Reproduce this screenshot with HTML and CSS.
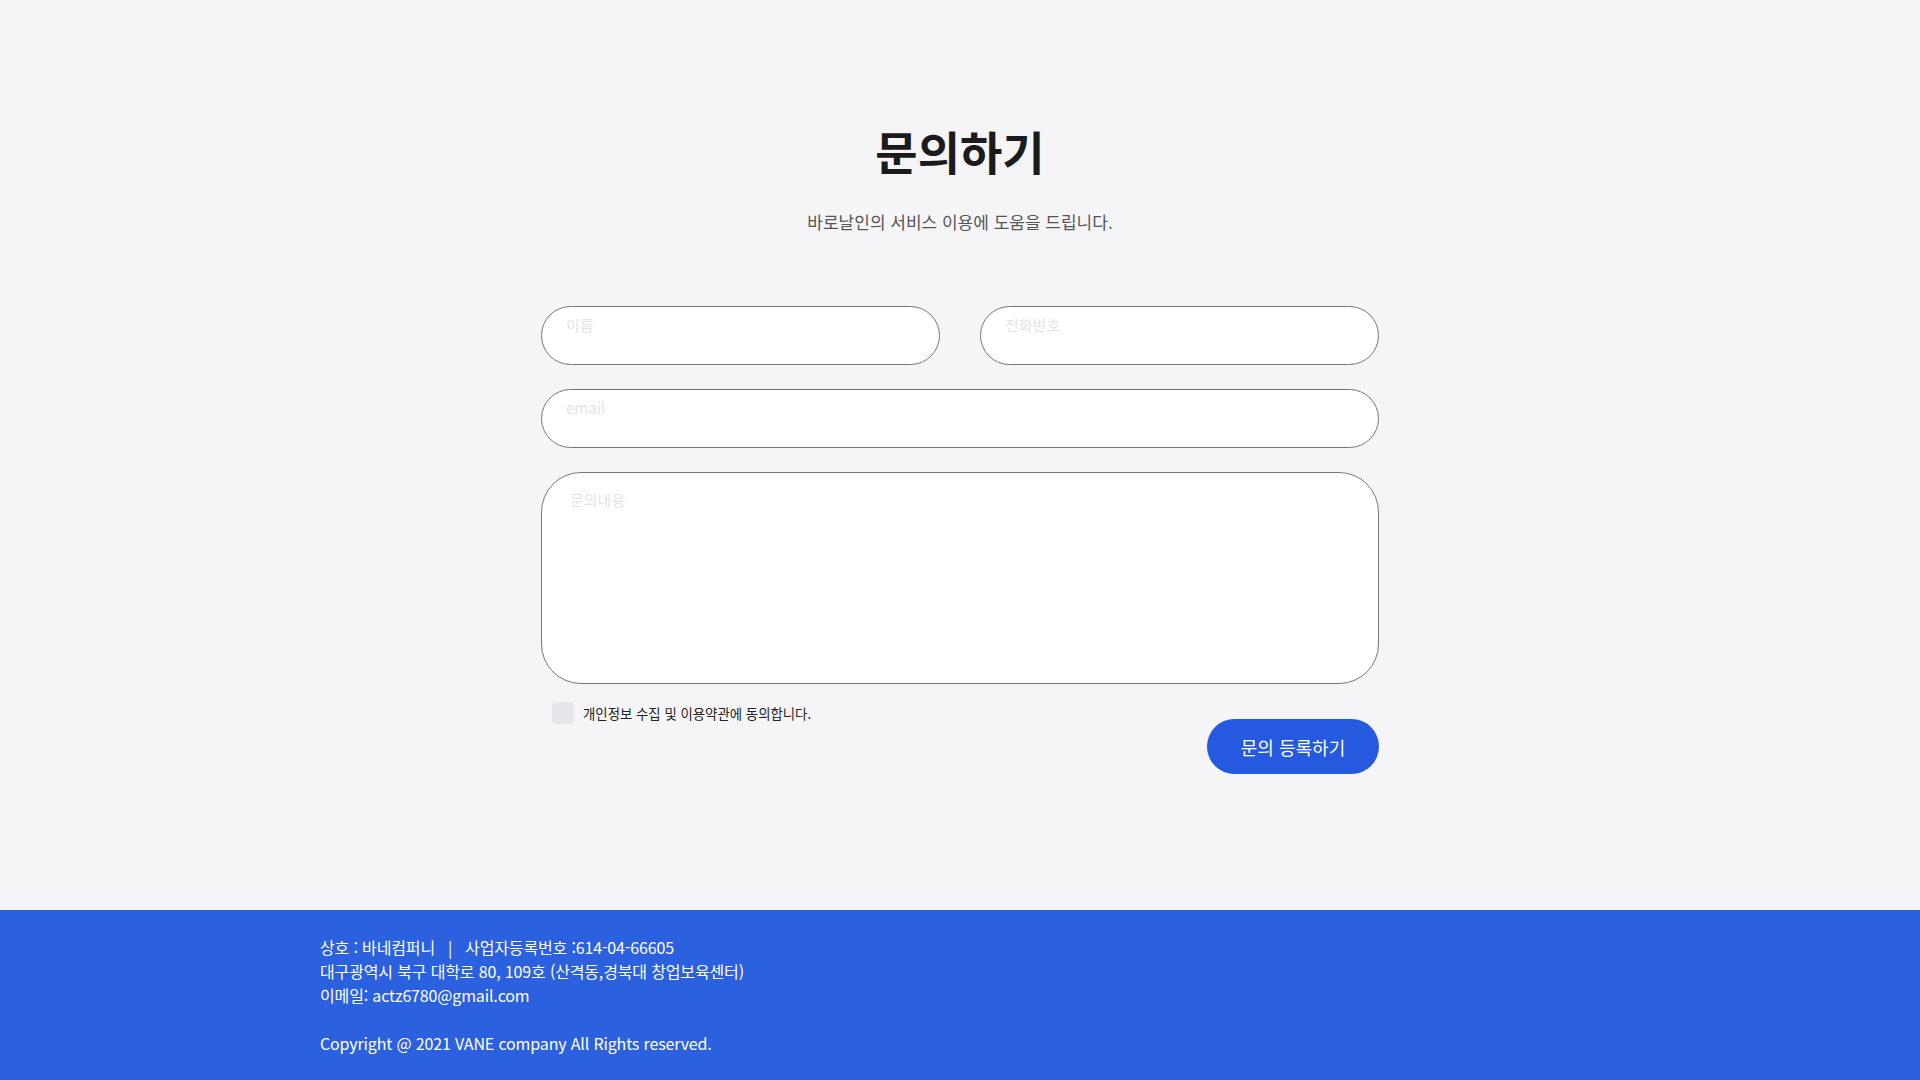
FILE: index.html
```html
<!DOCTYPE html>
<html lang="ko">
<head>
<meta charset="UTF-8">
<title>문의하기</title>
<link rel="stylesheet" href="styles.css">
</head>
<body>
<div class="page">
    <div class="contact">
        <h1 class="title">문의하기</h1>
        <p class="subtitle">바로날인의 서비스 이용에 도움을 드립니다.</p>
        <form class="contact-form">
            <div class="row two">
                <input type="text" class="field" placeholder="이름">
                <input type="text" class="field" placeholder="전화번호">
            </div>
            <div class="row">
                <input type="text" class="field" placeholder="email">
            </div>
            <div class="row">
                <textarea class="field message" placeholder="문의내용"></textarea>
            </div>
            <div class="form-bottom">
                <label class="agree">
                    <input type="checkbox" class="check">
                    <span>개인정보 수집 및 이용약관에 동의합니다.</span>
                </label>
                <button type="button" class="submit">문의 등록하기</button>
            </div>
        </form>
    </div>
    <div class="footer">
        <div class="footer-inner">
            <div>상호 : 바네컴퍼니 &nbsp;&nbsp;|&nbsp;&nbsp; 사업자등록번호 :614-04-66605</div>
            <div>대구광역시 북구 대학로 80, 109호 (산격동,경북대 창업보육센터)</div>
            <div>이메일: actz6780@gmail.com</div>
            <br>
            <div>Copyright @ 2021 VANE company All Rights reserved.</div>
        </div>
    </div>
</div>
</body>
</html>
```

FILE: styles.css
```css
body, html {
    margin: 0;
    height: 100%;
    font-family: "Noto Sans CJK KR", "Noto Sans", sans-serif;
    background-color: #f5f5f7;
    color: #222;
}
.page {
    min-height: 100%;
    display: flex;
    flex-direction: column;
}
.contact {
    flex: 1;
    width: 838px;
    margin: 0 auto;
    padding-top: 117px;
}
.title {
    margin: 0;
    text-align: center;
    font-size: 46px;
    font-weight: 700;
    color: #1b1b1b;
}
.subtitle {
    margin: 26px 0 0;
    text-align: center;
    font-size: 17px;
    color: #555;
}
.contact-form {
    margin-top: 72px;
}
.row {
    display: flex;
    margin-bottom: 24px;
}
.row.two {
    gap: 40px;
}
.field {
    flex: 1;
    box-sizing: border-box;
    height: 59px;
    padding: 6px 24px 28px;
    border: 1px solid #777;
    border-radius: 30px;
    background: #fff;
    font-family: inherit;
    font-size: 15px;
    outline: none;
}
.field::placeholder {
    color: #e3e4e8;
}
.message {
    height: 212px;
    padding: 16px 28px;
    border-radius: 40px;
    resize: none;
}
.form-bottom {
    display: flex;
    justify-content: space-between;
    align-items: flex-start;
    margin-top: -6px;
}
.agree {
    display: flex;
    align-items: center;
    gap: 9px;
    margin-left: 11px;
    font-size: 13.4px;
    color: #222;
}
.check {
    appearance: none;
    margin: 0;
    width: 22px;
    height: 22px;
    border-radius: 4px;
    background: #e5e7eb;
}
.submit {
    margin-top: 17px;
    width: 172px;
    height: 55px;
    border: none;
    border-radius: 28px;
    background-color: #2459e0;
    color: #fff;
    font-family: inherit;
    font-size: 18px;
    cursor: pointer;
}
.footer {
    background-color: #2b60df;
    color: #fff;
    padding: 25px 0 25px;
    font-size: 16px;
    line-height: 24px;
    letter-spacing: -0.15px;
}
.footer-inner {
    width: 1280px;
    margin: 0 auto;
}
```
